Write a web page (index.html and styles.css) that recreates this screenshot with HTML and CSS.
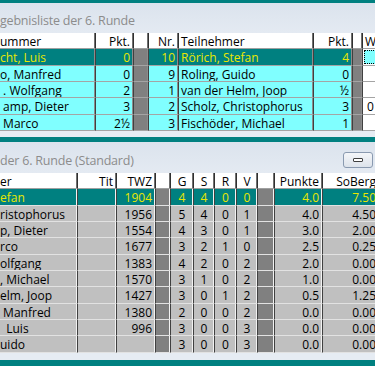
FILE: index.html
```html
<!DOCTYPE html>
<html lang="de">
<head>
<meta charset="utf-8">
<title>Turnier</title>
<link rel="stylesheet" href="styles.css">
</head>
<body>
<div class="desk">
  <section class="win win-top">
    <div class="titlebar"><span class="title">gebnisliste der 6. Runde</span></div>
    <div class="grid grid-top">
      <div class="c h n">ummer</div><div class="c h r">Pkt.</div><div class="c h"></div><div class="c h r">Nr.</div><div class="c h">Teilnehmer</div><div class="c h r">Pkt.</div><div class="c h"></div><div class="c h">W</div>

      <div class="c sel n">cht, Luis</div><div class="c sel r">0</div><div class="c sep"></div><div class="c sel r">10</div><div class="c sel">Rörich, Stefan</div><div class="c sel r">4</div><div class="c sep"></div><div class="c w"><span class="focus"></span></div>

      <div class="c n">o, Manfred</div><div class="c r">0</div><div class="c sep"></div><div class="c r">9</div><div class="c">Roling, Guido</div><div class="c r">0</div><div class="c sep"></div><div class="c w"></div>

      <div class="c n">&nbsp;. Wolfgang</div><div class="c r">2</div><div class="c sep"></div><div class="c r">1</div><div class="c">van der Helm, Joop</div><div class="c r">½</div><div class="c sep"></div><div class="c w"></div>

      <div class="c n">&nbsp;amp, Dieter</div><div class="c r">3</div><div class="c sep"></div><div class="c r">2</div><div class="c">Scholz, Christophorus</div><div class="c r">3</div><div class="c sep"></div><div class="c w">&nbsp;0</div>

      <div class="c n">&nbsp;Marco</div><div class="c r">2½</div><div class="c sep"></div><div class="c r">3</div><div class="c">Fischöder, Michael</div><div class="c r">1</div><div class="c sep"></div><div class="c w"></div>
    </div>
    <div class="frame-bottom"></div>
  </section>

  <section class="win win-low">
    <div class="titlebar">
      <span class="title">der 6. Runde (Standard)</span>
      <span class="minbtn"><span class="minglyph"></span></span>
    </div>
    <div class="grid grid-low">
      <div class="c h n">er</div><div class="c h r">Tit</div><div class="c h r">TWZ</div><div class="c h"></div><div class="c h ctr">G</div><div class="c h ctr">S</div><div class="c h ctr">R</div><div class="c h ctr">V</div><div class="c h"></div><div class="c h r">Punkte</div><div class="c h r">SoBerg</div>

      <div class="c sel n">efan</div><div class="c sel"></div><div class="c sel r">1904</div><div class="c sep"></div><div class="c sel ctr">4</div><div class="c sel ctr">4</div><div class="c sel ctr">0</div><div class="c sel ctr">0</div><div class="c sep"></div><div class="c sel r">4.0</div><div class="c sel r">7.50</div>

      <div class="c n">ristophorus</div><div class="c"></div><div class="c r">1956</div><div class="c sep"></div><div class="c ctr">5</div><div class="c ctr">4</div><div class="c ctr">0</div><div class="c ctr">1</div><div class="c sep"></div><div class="c r">4.0</div><div class="c r">4.50</div>

      <div class="c n">p, Dieter</div><div class="c"></div><div class="c r">1554</div><div class="c sep"></div><div class="c ctr">4</div><div class="c ctr">3</div><div class="c ctr">0</div><div class="c ctr">1</div><div class="c sep"></div><div class="c r">3.0</div><div class="c r">2.00</div>

      <div class="c n">rco</div><div class="c"></div><div class="c r">1677</div><div class="c sep"></div><div class="c ctr">3</div><div class="c ctr">2</div><div class="c ctr">1</div><div class="c ctr">0</div><div class="c sep"></div><div class="c r">2.5</div><div class="c r">0.25</div>

      <div class="c n">olfgang</div><div class="c"></div><div class="c r">1383</div><div class="c sep"></div><div class="c ctr">4</div><div class="c ctr">2</div><div class="c ctr">0</div><div class="c ctr">2</div><div class="c sep"></div><div class="c r">2.0</div><div class="c r">0.00</div>

      <div class="c n">, Michael</div><div class="c"></div><div class="c r">1570</div><div class="c sep"></div><div class="c ctr">3</div><div class="c ctr">1</div><div class="c ctr">0</div><div class="c ctr">2</div><div class="c sep"></div><div class="c r">1.0</div><div class="c r">0.00</div>

      <div class="c n">elm, Joop</div><div class="c"></div><div class="c r">1427</div><div class="c sep"></div><div class="c ctr">3</div><div class="c ctr">0</div><div class="c ctr">1</div><div class="c ctr">2</div><div class="c sep"></div><div class="c r">0.5</div><div class="c r">1.25</div>

      <div class="c n">&nbsp;Manfred</div><div class="c"></div><div class="c r">1380</div><div class="c sep"></div><div class="c ctr">2</div><div class="c ctr">0</div><div class="c ctr">0</div><div class="c ctr">2</div><div class="c sep"></div><div class="c r">0.0</div><div class="c r">0.00</div>

      <div class="c n">&nbsp;&nbsp;Luis</div><div class="c"></div><div class="c r">996</div><div class="c sep"></div><div class="c ctr">3</div><div class="c ctr">0</div><div class="c ctr">0</div><div class="c ctr">3</div><div class="c sep"></div><div class="c r">0.0</div><div class="c r">0.00</div>

      <div class="c n">uido</div><div class="c"></div><div class="c r"></div><div class="c sep"></div><div class="c ctr">3</div><div class="c ctr">0</div><div class="c ctr">0</div><div class="c ctr">3</div><div class="c sep"></div><div class="c r">0.0</div><div class="c r">0.00</div>
    </div>
    <div class="frame-bottom"></div>
  </section>
</div>
</body>
</html>
```
FILE: styles.css
```css
html, body {
  margin: 0;
  padding: 0;
}
body {
  width: 375px;
  height: 366px;
  overflow: hidden;
  background: #008080;
  font-family: "Open Sans", "Noto Sans", sans-serif;
  font-size: 12px;
  color: #000;
}
.desk {
  display: flex;
  flex-direction: column;
  gap: 5px;
  padding-top: 3px;
  width: 420px;
}
.win {
  background: #e3e9f1;
}
.titlebar {
  position: relative;
  height: 30px;
  background: linear-gradient(#dbe3ed, #e4eaf2);
  box-sizing: border-box;
  padding-top: 9px;
  line-height: 18px;
}
.win-low .titlebar {
  height: 31px;
  padding-top: 10px;
}
.title {
  color: #8c8c8c;
  font-size: 12.5px;
  letter-spacing: -0.2px;
}
.minbtn {
  position: absolute;
  left: 343px;
  top: 10px;
  width: 30px;
  height: 16px;
  box-sizing: border-box;
  border: 1px solid #8a9ab0;
  border-radius: 3px;
  background: linear-gradient(#f4f6f9, #dde3eb);
  display: flex;
  align-items: center;
  justify-content: center;
}
.minglyph {
  display: block;
  width: 10px;
  height: 4px;
  box-sizing: border-box;
  border: 1px solid #404040;
  border-radius: 1px;
  background: #fff;
}
.grid {
  display: grid;
  grid-auto-rows: 16.333px;
}
.grid-top {
  grid-template-columns: 96px 38px 15px 30px 135px 39px 10px 60px;
}
.grid-low {
  grid-template-columns: 78px 39px 39px 15px 23px 21px 22px 21px 17px 48px 57px;
}
.c {
  box-sizing: border-box;
  overflow: hidden;
  white-space: nowrap;
  line-height: 16px;
  padding: 1px 3px 0 2px;
  border-right: 1px solid #404040;
  border-bottom: 1px solid #a4a4a4;
  box-shadow: inset -1px 0 #8c8c8c;
  background: #80ffff;
}
.c.n {
  padding-left: 0;
}
.grid-low .c {
  background: #c0c0c0;
  border-bottom-color: #e2e2e2;
  box-shadow: inset -1px 0 #f2f2f2;
}
.grid .c.h {
  background: #fff;
  border-right-color: #303030;
  border-bottom-color: #a0a0a0;
  box-shadow: inset -1px 0 #707070;
}
.r {
  text-align: right;
}
.grid .c.ctr {
  text-align: center;
  padding-left: 0;
  padding-right: 0;
}
.grid .c.sel {
  background: #008080;
  color: #e8e800;
}
.grid .c.sep {
  background: #808080;
}
.grid .c.w {
  background: #fff;
  padding-left: 1px;
  position: relative;
}
.focus {
  position: absolute;
  left: 1px;
  top: 1px;
  right: 0;
  bottom: 1px;
  border: 1px dotted #000;
  background: #80ffff;
}
.frame-bottom {
  height: 6px;
  background: #e6ecf3;
}
.win-low .frame-bottom {
  height: 7px;
}
```
